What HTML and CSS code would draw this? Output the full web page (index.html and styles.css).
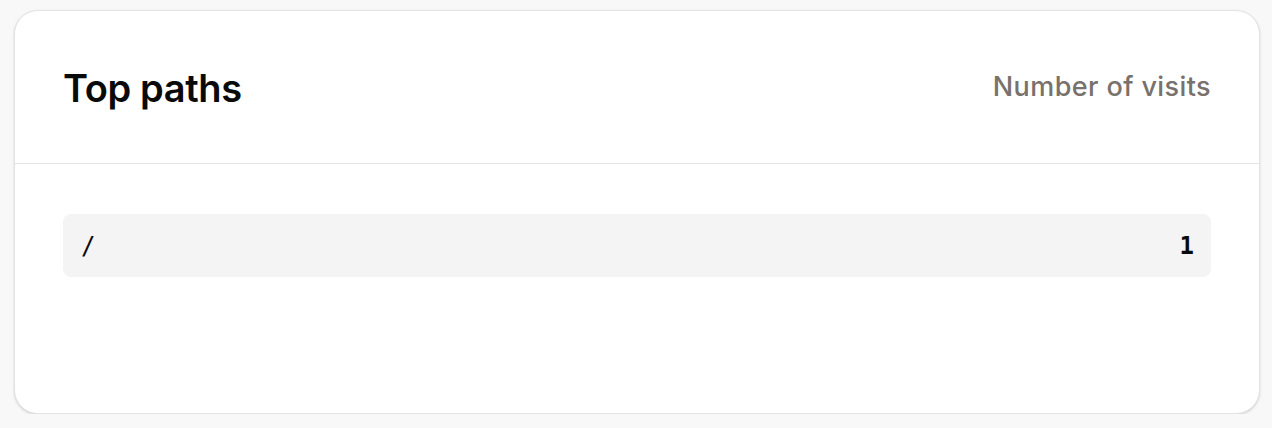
FILE: index.html
```html
<!DOCTYPE html>
<html lang="en">
<head>
<meta charset="utf-8">
<title>Top paths</title>
<link rel="stylesheet" href="styles.css">
</head>
<body>
  <section class="card">
    <header class="card-header">
      <h2 class="card-title">Top paths</h2>
      <span class="card-meta">Number of visits</span>
    </header>
    <div class="card-body">
      <ul class="path-list">
        <li class="path-row">
          <span class="path-name">/</span>
          <span class="path-count">1</span>
        </li>
      </ul>
    </div>
  </section>
</body>
</html>
```
FILE: styles.css
```css
html, body {
  margin: 0;
  padding: 0;
}
body {
  background: #f8f8f8;
  padding: 10px 12px 0 14px;
  font-family: Inter, "Noto Sans", sans-serif;
  color: #0a0a0a;
}
.card {
  background: #ffffff;
  border: 1px solid #e3e3e3;
  border-radius: 24px;
  box-shadow: 0 1px 3px rgba(0, 0, 0, 0.10), 0 1px 2px rgba(0, 0, 0, 0.06);
  height: 404px;
  box-sizing: border-box;
  display: flex;
  flex-direction: column;
}
.card-header {
  display: flex;
  align-items: center;
  justify-content: space-between;
  padding: 0 48px;
  height: 152px;
  border-bottom: 1px solid #e5e5e5;
}
.card-title {
  margin: 0;
  font-size: 38px;
  font-weight: 600;
  letter-spacing: -0.01em;
  line-height: 44px;
  padding-top: 2px;
}
.card-meta {
  font-size: 27px;
  color: #78716c;
  font-weight: 500;
  letter-spacing: 0.015em;
  line-height: 34px;
}
.card-body {
  padding: 50px 48px;
}
.path-list {
  list-style: none;
  margin: 0;
  padding: 0;
}
.path-row {
  display: flex;
  align-items: center;
  justify-content: space-between;
  background: #f4f4f4;
  border-radius: 8px;
  height: 63px;
  padding: 0 17px 0 18px;
  font-family: "DejaVu Sans Mono", "Liberation Mono", monospace;
  font-size: 24px;
}
.path-name {
  font-weight: 400;
}
.path-count {
  font-weight: 700;
}
```
